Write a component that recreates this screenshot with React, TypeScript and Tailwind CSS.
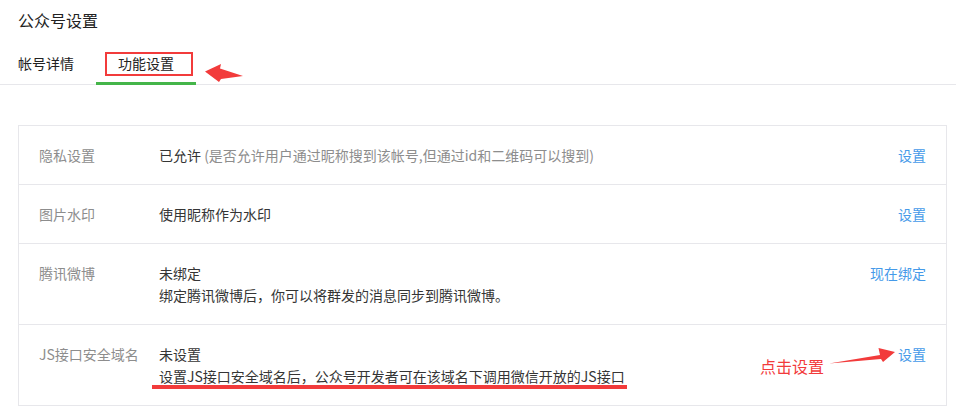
import React from "react";

const font = { fontFamily: '"Noto Sans CJK SC", "Noto Sans", sans-serif' };

function Row({
  label,
  children,
  link,
  last,
  extra,
}: {
  label: string;
  children: React.ReactNode;
  link: string;
  last?: boolean;
  extra?: React.ReactNode;
}) {
  return (
    <div
      className={`relative flex items-start py-[18px] pl-[20px] pr-[20px] text-[14px] leading-[22px] ${
        last ? "" : "border-b border-[#e7e7eb]"
      }`}
    >
      <div className="w-[120px] shrink-0 text-[#8d8d8d]">{label}</div>
      <div className="relative flex-1 text-[#353535]">{children}</div>
      <div className="shrink-0 text-[#459ae9]">{link}</div>
      {extra}
    </div>
  );
}

export default function App() {
  return (
    <div className="min-h-[412px] w-[956px] bg-white" style={font}>
      <div className="pl-[18px] pt-[8px] text-[16px] leading-[24px] text-[#222]">公众号设置</div>
      <div className="flex border-b border-[#e7e7eb]">
        <div className="-mb-px w-[96px] border-b-[3px] border-transparent pb-[8px] pl-[18px] pt-[20px] text-[14px] leading-[22px] text-[#222]">
          帐号详情
        </div>
        <div className="relative -mb-px w-[100px] border-b-[3px] border-[#44b549] pb-[8px] pt-[20px] text-center text-[14px] leading-[22px] text-[#222]">
          功能设置
          <div className="absolute left-[9px] top-[20px] h-[24px] w-[88px] border-2 border-[#f23b3b]" />
          <svg
            className="absolute left-[107px] top-[28px]"
            width="42"
            height="22"
            viewBox="203 60 42 22"
          >
            <polygon points="205,71.5 221,64 220,68.5 243,76 221,79 219,82" fill="#f23b3b" />
          </svg>
        </div>
      </div>

      <div className="ml-[18px] mt-[40px] w-[929px] border border-[#e7e7eb]">
        <Row label="隐私设置" link="设置">
          已允许 <span className="text-[#8d8d8d]">(是否允许用户通过昵称搜到该帐号,但通过id和二维码可以搜到)</span>
        </Row>
        <Row label="图片水印" link="设置">
          使用昵称作为水印
        </Row>
        <Row label="腾讯微博" link="现在绑定">
          <div>未绑定</div>
          <div>绑定腾讯微博后，你可以将群发的消息同步到腾讯微博。</div>
        </Row>
        <Row
          label="JS接口安全域名"
          link="设置"
          last
          extra={
            <>
              <div className="absolute left-[741px] top-[29px] text-[16px] leading-[24px] text-[#f23b3b]">
                点击设置
              </div>
              <svg
                className="absolute left-[808px] top-[21px]"
                width="70"
                height="20"
                viewBox="826 345 70 20"
              >
                <polygon points="828,362.5 879,354 877.5,347 894,351 882,361 880,358" fill="#f23b3b" />
              </svg>
            </>
          }
        >
          <div>未设置</div>
          <div>设置JS接口安全域名后，公众号开发者可在该域名下调用微信开放的JS接口</div>
          <div className="absolute left-[-7px] top-[42px] h-[4px] w-[475px] bg-[#f23b3b]" />
        </Row>
      </div>
    </div>
  );
}
